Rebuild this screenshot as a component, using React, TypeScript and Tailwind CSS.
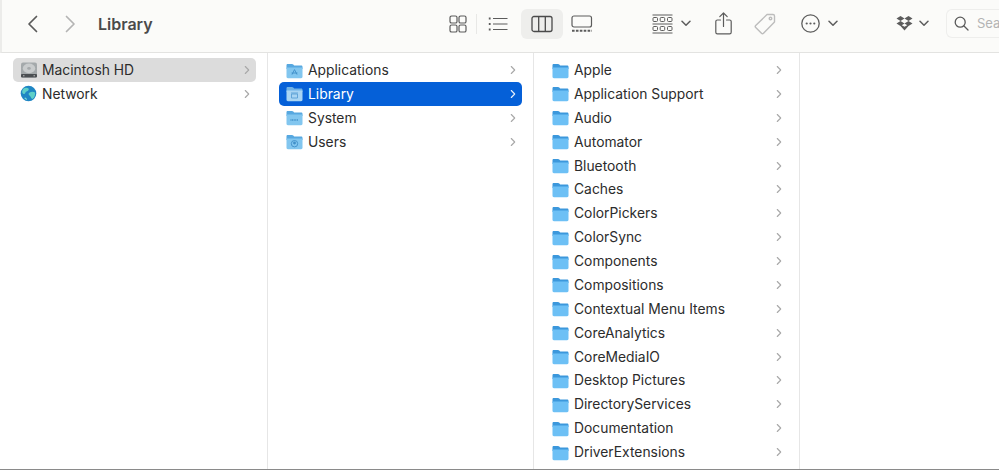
import React from "react";

const col3 = ["Apple","Application Support","Audio","Automator","Bluetooth","Caches","ColorPickers","ColorSync","Components","Compositions","Contextual Menu Items","CoreAnalytics","CoreMediaIO","Desktop Pictures","DirectoryServices","Documentation","DriverExtensions"];

function Chev({ white }: { white?: boolean }) {
  return (
    <svg width="6" height="10" viewBox="0 0 6 10" fill="none" stroke={white ? "#e8f0fb" : "#a8a8a8"} strokeWidth="1.100" strokeLinecap="round" strokeLinejoin="round" className="shrink-0">
      <path d="M1.300 1.500 4.700 5 1.300 8.500" />
    </svg>
  );
}

function Folder({ glyph, selected }: { glyph?: string; selected?: boolean }) {
  const pale = !!glyph;
  const top = selected ? "#6fb2e6" : pale ? "#57a8e0" : "#3c98dc";
  const body = selected ? "#a9d5f3" : pale ? "#82c6ef" : "#6dc0f5";
  const g = selected ? "#5a9fd6" : "#3f8fc8";
  return (
    <svg width="17" height="17" viewBox="0 0 17 17" className="shrink-0">
      <path d="M0.500 3.200C0.500 2.400 1 2 1.800 2h4.200c.6 0 .9.200 1.300.6l.9 1H15c.9 0 1.500.5 1.500 1.400V7H.5Z" fill={top} />
      <path d="M0.500 5.400h16v9.400c0 .8-.6 1.400-1.400 1.400H1.900c-.8 0-1.400-.6-1.400-1.400Z" fill={body} />
      {glyph === "apps" && <path d="M8.500 7.600 6 12.600M8.500 7.600l2.500 5M5.500 11h6" stroke={g} strokeWidth="0.900" fill="none" />}
      {glyph === "lib" && <path d="M5.500 9h6v4h-6ZM5 8h7" stroke={g} strokeWidth="0.900" fill="none" />}
      {glyph === "sys" && <path d="M4.500 11h8" stroke={g} strokeWidth="1.600" strokeDasharray="1 .6" fill="none" />}
      {glyph === "users" && <g fill="none" stroke={g} strokeWidth="0.900"><circle cx="8.500" cy="10.700" r="3.200" /><circle cx="8.500" cy="10" r="1" fill={g} /></g>}
    </svg>
  );
}

function Disk() {
  return (
    <svg width="18" height="18" viewBox="0 0 18 18" className="shrink-0">
      <rect x="1" y="1.500" width="16" height="15" rx="2" fill="#a4a9ab" />
      <rect x="1" y="13" width="16" height="3.500" rx="1" fill="#4b4f52" />
      <ellipse cx="9" cy="7.400" rx="6.200" ry="4.800" fill="#c9cccd" />
      <ellipse cx="9" cy="7.400" rx="1.800" ry="1.300" fill="#a5a9ab" />
      <path d="M3 14.800h1.500M13.500 14.800H15" stroke="#ddd" strokeWidth="0.800" />
    </svg>
  );
}

function Globe() {
  return (
    <svg width="17" height="17" viewBox="0 0 17 17" className="shrink-0">
      <circle cx="8.500" cy="8.500" r="7.800" fill="#1f86c4" />
      <path d="M3.500 3.500c2-1.300 4-1 5 0s-.5 2.500-2 3-1 2.500-2.500 2.500-2-1.500-1.800-3ZM9 8c2-1.500 4.500-1.500 6-.5.400 2.500-.5 5-2.500 6.500-1.500-.5-1.500-2-2.500-3S8 9 9 8Z" fill="#5fd0c8" />
      <path d="M5 12.500c1 0 2 1 2 2.500-1-.2-2-1-2.700-1.800Z" fill="#7adbd2" />
    </svg>
  );
}

function Row({ label, icon, selected, inactive }: { label: string; icon: React.ReactNode; selected?: boolean; inactive?: boolean }) {
  const bg = selected ? "bg-[#0560d8] text-white" : inactive ? "bg-[#dcdcdc] text-[#2c2c2c]" : "text-[#2c2c2c]";
  return (
    <div className={"flex h-[23.875px] items-center rounded-[5px] pl-[7px] pr-[6px] " + bg}>
      <span className="flex w-[22px] shrink-0 items-center">{icon}</span>
      <span className="flex-1 whitespace-nowrap text-[13.850px] leading-[20px]">{label}</span>
      <Chev white={selected} />
    </div>
  );
}

const ic = "#5c5c5c";

export default function App() {
  return (
    <div className="flex h-[470px] w-[999px] flex-col overflow-hidden bg-white font-['Inter','Liberation_Sans',sans-serif]">
      <header className="flex h-[53px] shrink-0 items-center border-b border-[#e3e3e1] border-l-2 border-l-[#ececea] bg-[#fbfbf9] pb-[5px] pl-[24px]">
        <svg width="13" height="20" viewBox="0 0 13 20" fill="none" stroke="#5a5a5a" strokeWidth="1.700" strokeLinecap="round" strokeLinejoin="round"><path d="M10.500 2.500 3 10l7.500 7.500" /></svg>
        <svg width="13" height="20" viewBox="0 0 13 20" fill="none" stroke="#b4b4b4" strokeWidth="1.700" strokeLinecap="round" strokeLinejoin="round" className="ml-[25px]"><path d="M2.500 2.500 10 10l-7.500 7.500" /></svg>
        <span className="ml-[21px] w-[351px] text-[16px] font-semibold text-[#4a4a4a]">Library</span>

        <svg width="18" height="18" viewBox="0 0 18 18" fill="none" stroke={ic} strokeWidth="1.200">
          <rect x="1" y="1" width="7" height="7" rx="1.600" /><rect x="10" y="1" width="7" height="7" rx="1.600" />
          <rect x="1" y="10" width="7" height="7" rx="1.600" /><rect x="10" y="10" width="7" height="7" rx="1.600" />
        </svg>
        <span className="ml-[9px] h-[20px] w-px bg-[#e8e8e6]" />
        <svg width="20" height="16" viewBox="0 0 20 16" fill="none" stroke={ic} strokeWidth="1.200" className="ml-[11px]">
          <path d="M5 2.500h14.500M5 8h14.500M5 13.500h14.500" />
          <path d="M.8 2.500h1.800M.8 8h1.800M.8 13.500h1.800" strokeWidth="1.800" />
        </svg>
        <span className="ml-[13px] flex h-[30px] w-[42px] items-center justify-center rounded-[6px] bg-[#eeeeec]">
          <svg width="22" height="18" viewBox="0 0 22 18" fill="none" stroke="#4a4a4a" strokeWidth="1.300">
            <rect x="1" y="1.500" width="20" height="15" rx="2" /><path d="M7.700 1.500v15M14.300 1.500v15" />
          </svg>
        </span>
        <svg width="22" height="18" viewBox="0 0 22 18" fill="none" stroke={ic} strokeWidth="1.200" className="ml-[8px]">
          <rect x="1" y="1" width="19.500" height="11" rx="2" />
          <path d="M1 15.800h20" strokeWidth="2" strokeDasharray="2.600 1.300" />
        </svg>

        <svg width="21" height="20" viewBox="0 0 21 20" fill="none" stroke={ic} strokeWidth="1" className="ml-[59px]">
          <path d="M.500 1h20M.500 10h20M.500 19h20" />
          <g strokeWidth="1"><rect x="1" y="3.500" width="4.500" height="4" rx="1" /><rect x="8.200" y="3.500" width="4.500" height="4" rx="1" /><rect x="15.500" y="3.500" width="4.500" height="4" rx="1" /><rect x="1" y="12.500" width="4.500" height="4" rx="1" /><rect x="8.200" y="12.500" width="4.500" height="4" rx="1" /><rect x="15.500" y="12.500" width="4.500" height="4" rx="1" /></g>
        </svg>
        <svg width="10" height="7" viewBox="0 0 10 7" fill="none" stroke={ic} strokeWidth="1.500" strokeLinecap="round" strokeLinejoin="round" className="ml-[8px]"><path d="M1 1.300 5 5.300 9 1.300" /></svg>

        <svg width="17" height="23" viewBox="0 0 17 23" fill="none" stroke={ic} strokeWidth="1.200" strokeLinecap="round" strokeLinejoin="round" className="ml-[24px]">
          <path d="M8.500 14.500V1.200M4.800 4.600 8.500 1l3.700 3.600" />
          <path d="M5.500 8H2.400C1.400 8 .8 8.600.8 9.600v10.600c0 1 .6 1.600 1.600 1.600h12.200c1 0 1.600-.6 1.600-1.600V9.600c0-1-.6-1.600-1.600-1.600h-3.100" />
        </svg>

        <svg width="22" height="22" viewBox="0 0 22 22" fill="none" stroke="#bdbdbd" strokeWidth="1.400" strokeLinejoin="round" className="ml-[22px]">
          <path d="M13 1.500h6c.9 0 1.500.6 1.500 1.500v6L9.500 20.300c-.6.600-1.400.6-2 0l-5.800-5.800c-.6-.6-.6-1.400 0-2Z" />
          <circle cx="16.500" cy="5.500" r="1.300" />
        </svg>

        <svg width="19" height="19" viewBox="0 0 19 19" fill="none" stroke={ic} strokeWidth="1.300" className="ml-[25px]">
          <circle cx="9.500" cy="9.500" r="8.700" />
          <g fill={ic} stroke="none"><circle cx="5.700" cy="9.500" r="1.100" /><circle cx="9.500" cy="9.500" r="1.100" /><circle cx="13.300" cy="9.500" r="1.100" /></g>
        </svg>
        <svg width="10" height="7" viewBox="0 0 10 7" fill="none" stroke={ic} strokeWidth="1.500" strokeLinecap="round" strokeLinejoin="round" className="ml-[8px]"><path d="M1 1.300 5 5.300 9 1.300" /></svg>

        <svg width="17" height="15" viewBox="0 0 17 15" fill={ic} className="ml-[58px]">
          <path d="M4.500 0 8.500 2.500 4.500 5 .5 2.500ZM12.500 0l4 2.500-4 2.500-4-2.500ZM4.500 5l4 2.500-4 2.500-4-2.500ZM12.500 5l4 2.500-4 2.500-4-2.500ZM8.500 10.700l4-2.300v1.700l-4 4.400-4-4.400V8.400Z" />
        </svg>
        <svg width="10" height="7" viewBox="0 0 10 7" fill="none" stroke={ic} strokeWidth="1.500" strokeLinecap="round" strokeLinejoin="round" className="ml-[6px]"><path d="M1 1.300 5 5.300 9 1.300" /></svg>

        <div className="ml-[17px] flex h-[29px] flex-1 items-center gap-[8px] overflow-hidden rounded-l-[6px] border border-r-0 border-[#eeeeec] pl-[7px]">
          <svg width="15" height="15" viewBox="0 0 15 15" fill="none" stroke="#5a5a5a" strokeWidth="1.300" strokeLinecap="round" className="shrink-0"><circle cx="6.200" cy="6.200" r="5" /><path d="m10 10 4 4" /></svg>
          <span className="text-[13px] text-[#b4b4b4]">Sea</span>
        </div>
      </header>

      <main className="flex min-h-0 flex-1">
        <section className="w-[268px] shrink-0 border-r border-[#e6e6e6] pl-[13px] pr-[11px] pt-[5.125px]">
          <Row label="Macintosh HD" icon={<Disk />} inactive />
          <Row label="Network" icon={<Globe />} />
        </section>
        <section className="w-[266px] shrink-0 border-r border-[#e6e6e6] pl-[11px] pr-[11px] pt-[5.125px]">
          <Row label="Applications" icon={<Folder glyph="apps" />} />
          <Row label="Library" icon={<Folder glyph="lib" selected />} selected />
          <Row label="System" icon={<Folder glyph="sys" />} />
          <Row label="Users" icon={<Folder glyph="users" />} />
        </section>
        <section className="w-[266px] shrink-0 border-r border-[#e6e6e6] pl-[11px] pr-[11px] pt-[5.125px]">
          {col3.map((n) => <Row key={n} label={n} icon={<Folder />} />)}
        </section>
      </main>
      <div className="h-px shrink-0 bg-[#8a8a8a]" />
    </div>
  );
}
